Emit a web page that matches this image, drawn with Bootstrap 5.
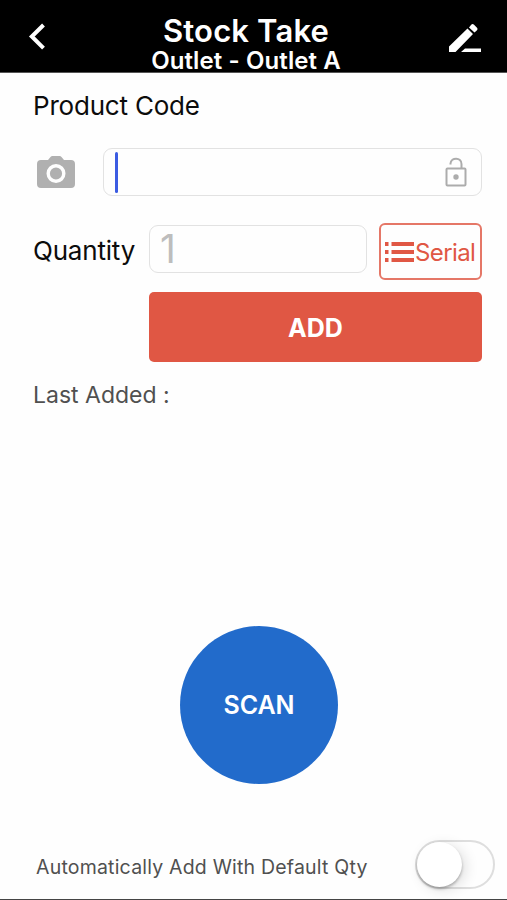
<!DOCTYPE html>
<html lang="en">
<head>
<meta charset="utf-8">
<meta name="viewport" content="width=device-width, initial-scale=1">
<title>Stock Take</title>
<link href="https://cdn.jsdelivr.net/npm/bootstrap@5.3.0/dist/css/bootstrap.min.css" rel="stylesheet">
<style>
body{font-family:Inter,"Liberation Sans",sans-serif;background:#fefefe;color:#0c0c0c}
.screen{height:900px;border-bottom:1px solid #444;overflow:hidden}
.topbar{height:73px;background:#000;border-bottom:1px solid #555;padding:12px 25px 0 28px}
.topbar svg{margin-top:10px}
.heading{margin-right:5px}
.title{font-size:31px;line-height:38px;font-weight:600;letter-spacing:.15px}
.subtitle{font-size:24px;line-height:22px;font-weight:600;letter-spacing:.1px}
.main-area{padding:17px 25px 0 33px}
.field-label{font-size:26px;line-height:32px;letter-spacing:-.2px}
.code-row{margin-top:26px;height:48px}
.camera{margin-left:4px;margin-right:28px}
.form-control.field{border:1px solid #e2e2e2;border-radius:9px;height:48px;background:#fefefe;color:#bdbdbd;padding:0 14px 0 11px}
.caret-bar{width:3px;height:41px;border-radius:2px;background:#3b5ce2}
.qty-row{margin-top:27px;height:57px}
.qty-label{width:116px;padding-bottom:1px}
.form-control.qty-value{font-size:39px;line-height:46px;font-weight:400;margin-bottom:5px;padding-left:10px}
.btn.serial{width:103px;height:57px;border:2px solid #e57767;border-radius:6px;color:#e05744;font-size:24px;letter-spacing:-.6px;padding:0 4px;margin-left:12px}
.btn.serial span{padding-top:2px}
.btn.add{margin:12px 0 0 116px;height:70px;border-radius:5px;background:#e05744;color:#fff;font-size:25px;font-weight:700;width:333px;padding-top:9px}
.last-added{margin-top:17px;font-size:23px;line-height:32px;color:#505050}
.btn.scan{width:158px;height:158px;background:#226bcb;color:#fff;font-size:25px;font-weight:600;margin:215px 0 0 180px;padding:2px 0 0}
.footer-row{margin-top:50px;height:60px;padding:0 12px 0 36px;color:#505050;font-size:19.5px;letter-spacing:.2px}
.footer-row span{padding-top:7px}
.toggle{width:80px;height:49px;border:2px solid #dedede;border-radius:25px}
.knob{width:45px;height:45px;border-radius:50%;background:#fff;box-shadow:0 2px 3px rgba(0,0,0,.28),4px 3px 14px rgba(0,0,0,.12)}
</style>
</head>
<body>
<div class="screen">
  <header class="topbar text-white d-flex justify-content-between align-items-start">
    <svg width="20" height="30" viewBox="0 0 20 30" fill="none" stroke="#fff" stroke-width="4"><path d="M15.500 3 3.800 14.500l11.700 11.700"/></svg>
    <div class="heading text-center"><div class="title">Stock Take</div><div class="subtitle">Outlet - Outlet A</div></div>
    <svg width="33" height="32" viewBox="0 0 33 32" fill="#fff"><path d="M0 24.500 18.500 6.500 24 12 6.500 30H0zM20 5.500 22.200 2.700q1.200-1.500 2.600-.2l3.200 3.200q1.200 1.300 0 2.500L25.500 10.500zM12 30l4-3.500h16V30z"/></svg>
  </header>
  <main class="main-area">
    <div class="field-label">Product Code</div>
    <div class="code-row d-flex align-items-center">
      <svg class="camera flex-shrink-0" width="38" height="32" viewBox="0 0 38 32"><path fill="#b0b0b0" d="M4 4h7l2.500-3Q14.200 0 15.500 0h7q1.300 0 2 1L27 4h7q4 0 4 4v20q0 4-4 4H4q-4 0-4-4V8q0-4 4-4z"/><circle cx="19" cy="17.500" r="7.800" fill="none" stroke="#fefefe" stroke-width="3.400"/></svg>
      <div class="form-control field d-flex align-items-center justify-content-between">
        <span class="caret-bar"></span>
        <svg width="22" height="30" viewBox="0 0 22 30"><path fill="none" stroke="#acacac" stroke-width="2" d="M2.500 11.500h17q1 0 1 1v15q0 1-1 1h-17q-1 0-1-1v-15q0-1 1-1zM5.500 7.500v-1c.5-6.500 11-6.500 11 .5v4.500"/><circle cx="11" cy="20" r="2.700" fill="#acacac"/></svg>
      </div>
    </div>
    <div class="qty-row d-flex align-items-center">
      <div class="field-label qty-label flex-shrink-0">Quantity</div>
      <div class="form-control field qty-value">1</div>
      <button class="btn serial flex-shrink-0 d-flex align-items-center"><svg class="flex-shrink-0" width="30" height="20" viewBox="0 0 30 20" fill="#e05744"><path d="M0 0h3.500v4H0zM6.500 0h22.500v4H6.500zM0 8h3.500v4H0zM6.500 8h22.500v4H6.500zM0 16h3.500v4H0zM6.500 16h22.500v4H6.500z"/></svg><span>Serial</span></button>
    </div>
    <button class="btn add d-block">ADD</button>
    <div class="last-added">Last Added :</div>
  </main>
  <button class="btn scan rounded-circle d-block">SCAN</button>
  <div class="footer-row d-flex align-items-center justify-content-between">
    <span>Automatically Add With Default Qty</span>
    <div class="toggle" role="switch" aria-checked="false"><div class="knob"></div></div>
  </div>
</div>
<script src="https://cdn.jsdelivr.net/npm/bootstrap@5.3.0/dist/js/bootstrap.bundle.min.js"></script>
</body>
</html>
